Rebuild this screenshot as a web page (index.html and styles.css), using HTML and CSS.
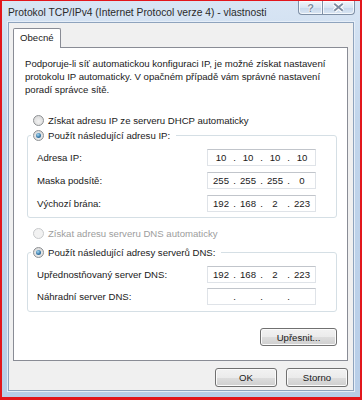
FILE: index.html
```html
<!DOCTYPE html>
<html lang="cs">
<head>
    <meta charset="UTF-8">
    <meta name="viewport" content="width=device-width, initial-scale=1.0">
    <title>Protokol TCP/IPv4 (Internet Protocol verze 4) - vlastnosti</title>
    <link rel="stylesheet" href="styles.css">
</head>
<body>
    <div class="window">
        <div class="titlebar">
            <span class="title">Protokol TCP/IPv4 (Internet Protocol verze 4) - vlastnosti</span>
            <div class="caption">
                <span class="cap-btn help">?</span>
                <span class="cap-btn close">
                    <svg width="33" height="13" viewBox="0 0 33 13">
                        <path d="M12 2.5 L21 10 M21 2.5 L12 10" stroke="#fff" stroke-width="4.5" fill="none"/>
                        <path d="M12 2.5 L21 10 M21 2.5 L12 10" stroke="#7d8ca1" stroke-width="2" fill="none"/>
                    </svg>
                </span>
            </div>
        </div>

        <div class="client">
            <div class="tabs">
                <div class="tab">Obecné</div>
            </div>

            <div class="panel">
                <p class="intro">Podporuje-li síť automatickou konfiguraci IP, je možné získat nastavení<br>protokolu IP automaticky. V opačném případě vám správné nastavení<br>poradí správce sítě.</p>

                <div class="radio radio-first"><span class="dot-box"></span>Získat adresu IP ze serveru DHCP automaticky</div>

                <fieldset class="group">
                    <legend><span class="radio"><span class="dot-box checked"></span>Použít následující adresu IP:</span></legend>
                    <div class="row">
                        <span>Adresa IP:</span>
                        <div class="ip"><span class="oct">10</span><span class="sep">.</span><span class="oct">10</span><span class="sep">.</span><span class="oct">10</span><span class="sep">.</span><span class="oct">10</span></div>
                    </div>
                    <div class="row">
                        <span>Maska podsítě:</span>
                        <div class="ip"><span class="oct">255</span><span class="sep">.</span><span class="oct">255</span><span class="sep">.</span><span class="oct">255</span><span class="sep">.</span><span class="oct">0</span></div>
                    </div>
                    <div class="row">
                        <span>Výchozí brána:</span>
                        <div class="ip"><span class="oct">192</span><span class="sep">.</span><span class="oct">168</span><span class="sep">.</span><span class="oct">2</span><span class="sep">.</span><span class="oct">223</span></div>
                    </div>
                </fieldset>

                <div class="radio radio-disabled"><span class="dot-box disabled"></span>Získat adresu serveru DNS automaticky</div>

                <fieldset class="group group-dns">
                    <legend><span class="radio"><span class="dot-box checked"></span>Použít následující adresy serverů DNS:</span></legend>
                    <div class="row">
                        <span>Upřednostňovaný server DNS:</span>
                        <div class="ip"><span class="oct">192</span><span class="sep">.</span><span class="oct">168</span><span class="sep">.</span><span class="oct">2</span><span class="sep">.</span><span class="oct">223</span></div>
                    </div>
                    <div class="row">
                        <span>Náhradní server DNS:</span>
                        <div class="ip"><span class="oct"></span><span class="sep">.</span><span class="oct"></span><span class="sep">.</span><span class="oct"></span><span class="sep">.</span><span class="oct"></span></div>
                    </div>
                </fieldset>

                <div class="advanced">
                    <button class="btn btn-wide">Upřesnit...</button>
                </div>
            </div>

            <div class="footer">
                <button class="btn">OK</button>
                <button class="btn">Storno</button>
            </div>
        </div>
    </div>
</body>
</html>
```

FILE: styles.css
```css
* {
    box-sizing: border-box;
}
body {
    margin: 0;
    font-family: "Liberation Sans", Arial, sans-serif;
    font-size: 9.6px;
    color: #1a1a1a;
}
.window {
    width: 362px;
    height: 400px;
    border-style: solid;
    border-color: #e2161c;
    border-width: 1px 2px 3px 2px;
    padding: 0 6px 6px;
    display: flex;
    flex-direction: column;
    background: linear-gradient(#d8e5f4, #c1d5eb 30%, #b8cee8);
}

/* title bar */
.titlebar {
    height: 21px;
    display: flex;
    align-items: flex-start;
}
.title {
    align-self: center;
    margin-top: 1px;
    color: #2a2a2a;
    font-size: 10.3px;
    white-space: nowrap;
}
.caption {
    margin-left: auto;
    margin-right: -1px;
    display: flex;
    height: 14px;
}
.cap-btn {
    height: 14px;
    display: flex;
    align-items: center;
    justify-content: center;
    border: 1px solid #7f90a6;
    border-top: none;
    background: linear-gradient(#f0f5fb, #d9e5f2 50%, #c6d7eb 51%, #dae6f3);
    box-shadow: inset 0 0 0 1px rgba(255, 255, 255, 0.7);
}
.help {
    width: 24px;
    border-radius: 0 0 0 4px;
    border-right: none;
    color: #7d8ca1;
    font-weight: bold;
    font-size: 11px;
    text-shadow: 0 0 2px #fff, 0 0 1px #fff, 0 0 1px #fff;
}
.close {
    width: 33px;
    border-radius: 0 0 4px 0;
}

/* client area */
.client {
    flex: 1;
    background: #f0f0f0;
    border: 1px solid #8ea3bd;
    box-shadow: 0 0 0 1px #e6eef8;
    padding: 0 5px 0 4px;
    display: flex;
    flex-direction: column;
}
.tabs {
    display: flex;
    margin-top: 5px;
    height: 19px;
}
.tab {
    position: relative;
    z-index: 1;
    height: 20px;
    padding: 3px 6px 0;
    background: #fff;
    border: 1px solid #898c95;
    border-bottom: none;
    border-radius: 2px 2px 0 0;
}
.panel {
    height: 314px;
    background: #fff;
    border: 1px solid #898c95;
    padding: 9px 10px 0 11px;
}
.intro {
    margin: 0;
    line-height: 13px;
    white-space: nowrap;
}

/* radios */
.radio {
    display: flex;
    align-items: center;
    gap: 4px;
    height: 14px;
    white-space: nowrap;
}
.radio-first {
    margin: 17px 0 0 8px;
}
.radio-disabled {
    margin: 8px 0 0 8px;
    color: #9d9d9d;
}
.dot-box {
    width: 11px;
    height: 11px;
    border-radius: 50%;
    border: 1px solid #8e9194;
    background: radial-gradient(circle at 50% 60%, #f2f2f2, #d3d3d3);
    display: flex;
    align-items: center;
    justify-content: center;
}
.dot-box.checked::after {
    content: "";
    width: 5px;
    height: 5px;
    border-radius: 50%;
    background: radial-gradient(circle at 40% 35%, #a9dbf5, #3a7bab 55%, #1d4e78);
}
.dot-box.disabled {
    border-color: #c8cacc;
    background: #f2f2f2;
}

/* group boxes */
.group {
    margin: 1px 0 0 2px;
    border: 1px solid #d5dfe5;
    border-radius: 3px;
    padding: 7px 20px 5px 9px;
    display: flex;
    flex-direction: column;
    gap: 6px;
}
.group-dns {
    margin-top: 5px;
    gap: 5px;
    padding-bottom: 6px;
}
.group legend {
    margin-left: -6px;
    padding: 0 6px 0 2px;
}
.row {
    height: 17px;
    display: flex;
    align-items: center;
    justify-content: space-between;
}
.ip {
    width: 109px;
    height: 17px;
    display: flex;
    align-items: center;
    justify-content: center;
    border: 1px solid #dfe3e8;
    border-top-color: #c1c5cb;
    background: #fff;
}
.oct {
    width: 21px;
    text-align: center;
}
.sep {
    width: 6px;
    text-align: center;
}

/* buttons */
.btn {
    width: 62px;
    height: 19px;
    padding: 0;
    font: inherit;
    color: #1a1a1a;
    border: 1px solid #707070;
    border-radius: 3px;
    background: linear-gradient(#f2f2f2, #ebebeb 50%, #dddddd 51%, #cfcfcf);
    box-shadow: inset 0 0 0 1px #fbfbfb;
}
.btn-wide {
    width: 77px;
    height: 18px;
}
.advanced {
    display: flex;
    justify-content: flex-end;
    margin-top: 16px;
}
.footer {
    display: flex;
    justify-content: flex-end;
    gap: 9px;
    margin-top: 7px;
}
```
